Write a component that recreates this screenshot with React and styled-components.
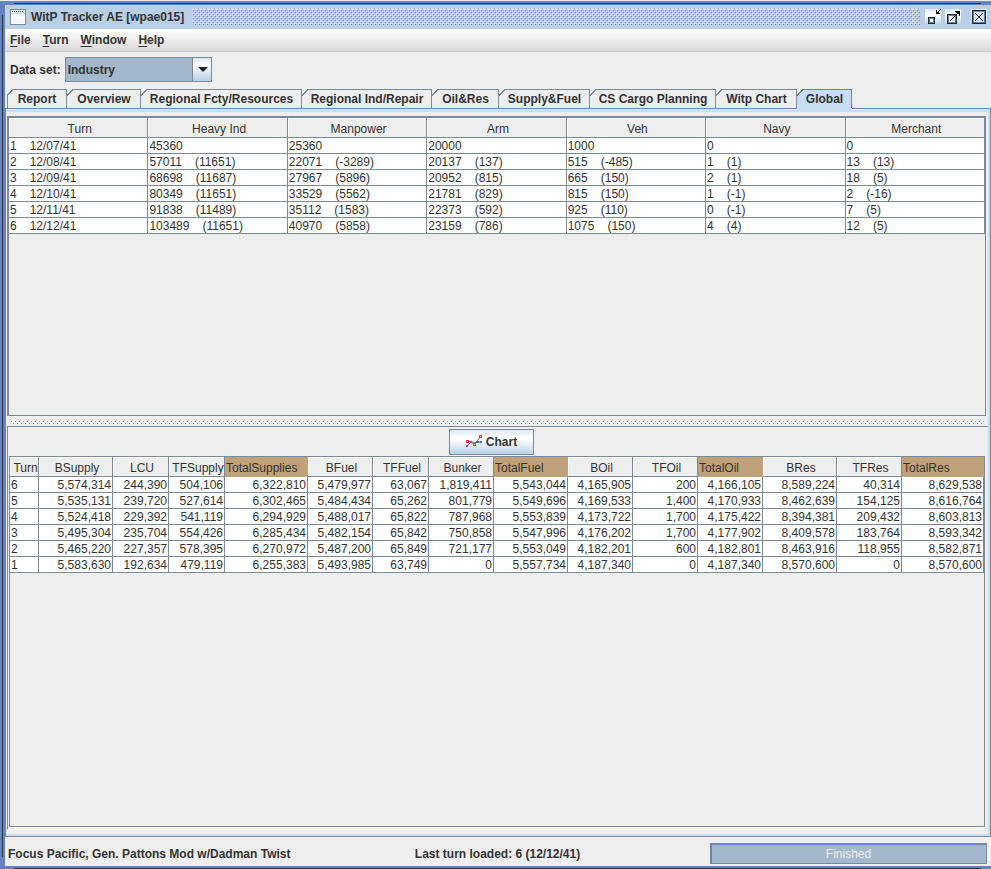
import React from "react";
import styled, { createGlobalStyle, ThemeProvider } from "styled-components";

const theme = {
  text: "#333333",
  panel: "#eeeeee",
  line: "#7a8a99",
  frame: "#6382bf",
  title: "#b8cfe5",
  selected: "#c8ddf2",
  fill: "#a3b8cc",
  total: "#c0a27a"
};

const GlobalStyle = createGlobalStyle`
  * {
    box-sizing: border-box;
  }
  body {
    margin: 0;
    font-family: "Liberation Sans", Arial, sans-serif;
    font-size: 12px;
    line-height: 14px;
    color: #333333;
    background: #eeeeee;
  }
  button, select {
    font: inherit;
    color: inherit;
  }
`;

const Desktop = styled.div`
  display: flex;
  flex-direction: column;
  min-height: 100vh;
  padding-top: 1px;
`;

const Frame = styled.div`
  flex: 1;
  display: flex;
  flex-direction: column;
  padding: 4px 0 3px 5px;
  background:
    linear-gradient(#333, #333) 14px 2px / calc(100% - 24px) 1px no-repeat,
    linear-gradient(#333, #333) 14px 100% / calc(100% - 24px) 1px no-repeat,
    linear-gradient(#333, #333) 2px 14px / 1px calc(100% - 26px) no-repeat,
    ${({ theme }) => theme.frame};
`;

const TitleBar = styled.header`
  display: flex;
  align-items: center;
  height: 24px;
  padding: 0 4px 0 5px;
  gap: 5px;
  background: ${({ theme }) => theme.title};
`;

const Title = styled.h1`
  margin: 0;
  font-size: 12px;
  font-weight: bold;
`;

const TitleBumps = styled.div`
  flex: 1;
  height: 16px;
  margin: 0 0 0 3px;
  background:
    conic-gradient(from 270deg at 1px 1px, #fff 90deg, transparent 0) 0 0 / 4px 4px,
    conic-gradient(from 270deg at 1px 1px, #fff 90deg, transparent 0) 2px 2px / 4px 4px,
    conic-gradient(from 270deg at 1px 1px, #6382bf 90deg, transparent 0) 1px 1px / 4px 4px,
    conic-gradient(from 270deg at 1px 1px, #6382bf 90deg, transparent 0) 3px 3px / 4px 4px;
`;

const WindowButtons = styled.div`
  display: flex;
  gap: 4px;
`;

const WindowButton = styled.button`
  display: block;
  width: 16px;
  height: 16px;
  padding: 0;
  border: none;
  background: linear-gradient(#dde8f3, #ffffff 40%, #b8cfe5);
  margin-left: ${({ $spaced }) => ($spaced ? "6px" : "0")};
  svg {
    display: block;
  }
`;

const MenuBar = styled.nav`
  display: flex;
  align-items: center;
  gap: 12px;
  height: 23px;
  padding: 0 5px;
  border-bottom: 1px solid #cccccc;
  background: linear-gradient(#ffffff, #dadada);
`;

const MenuItem = styled.button`
  padding: 0;
  border: none;
  background: none;
  font-weight: bold;
  u {
    text-underline-offset: 2px;
  }
`;

const Toolbar = styled.div`
  display: flex;
  align-items: center;
  gap: 4px;
  height: 37px;
  padding: 0 5px 2px;
  font-weight: bold;
  background: ${({ theme }) => theme.panel};
`;

const SelectWrapper = styled.div`
  position: relative;
  svg {
    position: absolute;
    top: 10px;
    right: 4px;
    pointer-events: none;
  }
`;

const Select = styled.select`
  display: block;
  appearance: none;
  width: 147px;
  height: 25px;
  padding: 0 20px 0 2px;
  border: 1px solid ${({ theme }) => theme.line};
  border-radius: 0;
  font-weight: bold;
  background:
    linear-gradient(#7a8a99, #7a8a99) calc(100% - 18px) 0 / 1px 100% no-repeat,
    linear-gradient(#dde8f3, #ffffff 30%, #b8cfe5) 100% 0 / 18px 100% no-repeat,
    ${({ theme }) => theme.fill};
`;

const Tabs = styled.div`
  display: flex;
  padding-left: 2px;
  background: ${({ theme }) => theme.panel};
`;

const Tab = styled.button`
  position: relative;
  flex: none;
  width: ${({ $width }) => $width}px;
  height: ${({ $active }) => ($active ? "22px" : "19px")};
  margin-bottom: ${({ $active }) => ($active ? "-3px" : "0")};
  padding: ${({ $active }) => ($active ? "0 0 3px" : "0")};
  border: none;
  font-weight: bold;
  white-space: nowrap;
  color: ${({ theme }) => theme.text};
  --edge: ${({ theme, $active }) => ($active ? theme.frame : theme.line)};
  --fill: ${({ theme, $active }) => ($active ? theme.selected : theme.panel)};
  background:
    linear-gradient(var(--edge), var(--edge)) 6px 0 / calc(100% - 6px) 1px no-repeat,
    linear-gradient(var(--edge), var(--edge)) 100% 0 / 1px ${({ $active }) => ($active ? "19px" : "100%")} no-repeat,
    linear-gradient(135deg, transparent 4px, var(--edge) 4px, var(--edge) 5px, var(--fill) 5px);
  &:first-child {
    background:
      linear-gradient(var(--edge), var(--edge)) 6px 0 / calc(100% - 6px) 1px no-repeat,
      linear-gradient(var(--edge), var(--edge)) 0 6px / 1px 100% no-repeat,
      linear-gradient(var(--edge), var(--edge)) 100% 0 / 1px 100% no-repeat,
      linear-gradient(135deg, transparent 4px, var(--edge) 4px, var(--edge) 5px, var(--fill) 5px);
  }
`;

const TabPane = styled.main`
  flex: 1;
  display: flex;
  flex-direction: column;
  border-top: 1px solid ${({ theme }) => theme.frame};
  border-left: 1px solid ${({ theme }) => theme.frame};
  border-right: 1px solid ${({ theme }) => theme.line};
  border-bottom: 1px solid ${({ theme }) => theme.line};
  background: ${({ theme }) => theme.panel};
`;

const PaneContent = styled.div`
  flex: 1;
  display: flex;
  flex-direction: column;
  margin-top: 1px;
  border-top: 2px solid ${({ theme }) => theme.selected};
  border-right: 2px solid ${({ theme }) => theme.selected};
  border-bottom: 2px solid ${({ theme }) => theme.selected};
  padding: 4px 0 4px 1px;
`;

const TurnPanel = styled.section`
  flex: 300 0 0;
  margin-right: 2px;
  border: 2px solid ${({ theme }) => theme.line};
  border-right-width: 1px;
  border-bottom-width: 1px;
  box-shadow: 0 1px 0 #ffffff;
`;

const Divider = styled.div`
  height: 10px;
  padding: 4px 3px 2px;
  background: ${({ theme }) => theme.panel};
  &::before {
    content: "";
    display: block;
    height: 4px;
    background:
      conic-gradient(from 270deg at 1px 1px, #7a8a99 90deg, transparent 0) 1px 1px / 4px 4px,
      conic-gradient(from 270deg at 1px 1px, #7a8a99 90deg, transparent 0) 3px 3px / 4px 4px,
      conic-gradient(from 270deg at 1px 1px, #fff 90deg, transparent 0) 0 0 / 4px 4px,
      conic-gradient(from 270deg at 1px 1px, #fff 90deg, transparent 0) 2px 2px / 4px 4px;
  }
`;

const StockPanel = styled.section`
  flex: 401 0 0;
  display: flex;
  flex-direction: column;
  padding: 2px 2px 2px 1px;
  border-top: 1px solid ${({ theme }) => theme.line};
  border-left: 1px solid ${({ theme }) => theme.line};
  border-bottom: 1px solid #ffffff;
`;

const ChartButton = styled.button`
  align-self: center;
  display: flex;
  align-items: center;
  justify-content: center;
  gap: 4px;
  width: 85px;
  height: 26px;
  margin: 0 12px 1px 0;
  padding: 0;
  border: 1px solid ${({ theme }) => theme.line};
  font-weight: bold;
  background: linear-gradient(#dde8f3, #ffffff 30%, #ffffff 40%, #b8cfe5);
`;

const StockScroll = styled.div`
  flex: 1;
  border: 1px solid ${({ theme }) => theme.line};
  margin-right: 1px;
  box-shadow: 0 1px 0 #ffffff;
`;

const Table = styled.table`
  width: 100%;
  table-layout: fixed;
  border-collapse: separate;
  border-spacing: 0;
`;

const Column = styled.col`
  width: ${({ $width }) => $width}px;
`;

const HeadCell = styled.th`
  height: 20px;
  padding: ${({ $total }) => ($total ? "2px 0 0 1px" : "2px 0 0 3px")};
  font-weight: normal;
  text-align: ${({ $total }) => ($total ? "left" : "center")};
  white-space: nowrap;
  overflow: hidden;
  border-right: 1px solid ${({ theme, $total }) => ($total ? theme.total : theme.line)};
  border-bottom: 1px solid ${({ theme, $total }) => ($total ? theme.total : theme.line)};
  background: ${({ theme, $total }) => ($total ? theme.total : theme.panel)};
  box-shadow: ${({ $total }) => ($total ? "none" : "inset 1px 1px 0 #ffffff")};
`;

const Cell = styled.td`
  height: 16px;
  padding: 1px 1px 0;
  text-align: ${({ $right }) => ($right ? "right" : "left")};
  white-space: pre;
  overflow: hidden;
  border-right: 1px solid ${({ theme }) => theme.line};
  border-bottom: 1px solid ${({ theme }) => theme.line};
  background: #ffffff;
`;

const Change = styled.span`
  margin-left: 13px;
`;

const StatusBar = styled.footer`
  display: grid;
  grid-template-columns: 1fr auto 1fr;
  align-items: center;
  height: 29px;
  padding: 4px 4px 0 3px;
  font-weight: bold;
  background: ${({ theme }) => theme.panel};
`;

const Progress = styled.div`
  justify-self: end;
  width: 277px;
  height: 21px;
  border: 1px solid ${({ theme }) => theme.line};
  box-shadow: inset 1px 1px 0 ${({ theme }) => theme.frame};
  line-height: 20px;
  font-weight: normal;
  text-align: center;
  color: #eeeeee;
  background: ${({ theme }) => theme.fill};
`;

const menus = ["File", "Turn", "Window", "Help"];

const tabs = [
  { name: "Report", width: 60 },
  { name: "Overview", width: 74 },
  { name: "Regional Fcty/Resources", width: 161 },
  { name: "Regional Ind/Repair", width: 130 },
  { name: "Oil&Res", width: 67 },
  { name: "Supply&Fuel", width: 91 },
  { name: "CS Cargo Planning", width: 126 },
  { name: "Witp Chart", width: 81 },
  { name: "Global", width: 55 }
];

const turnColumns = ["Turn", "Heavy Ind", "Manpower", "Arm", "Veh", "Navy", "Merchant"];

// each value is followed by its change since the previous turn
const turnRows = [
  ["1|12/07/41", "45360", "25360", "20000", "1000", "0", "0"],
  ["2|12/08/41", "57011|(11651)", "22071|(-3289)", "20137|(137)", "515|(-485)", "1|(1)", "13|(13)"],
  ["3|12/09/41", "68698|(11687)", "27967|(5896)", "20952|(815)", "665|(150)", "2|(1)", "18|(5)"],
  ["4|12/10/41", "80349|(11651)", "33529|(5562)", "21781|(829)", "815|(150)", "1|(-1)", "2|(-16)"],
  ["5|12/11/41", "91838|(11489)", "35112|(1583)", "22373|(592)", "925|(110)", "0|(-1)", "7|(5)"],
  ["6|12/12/41", "103489|(11651)", "40970|(5858)", "23159|(786)", "1075|(150)", "4|(4)", "12|(5)"]
];

const stockColumns = [
  { name: "Turn", width: 29 },
  { name: "BSupply", width: 74 },
  { name: "LCU", width: 56 },
  { name: "TFSupply", width: 56 },
  { name: "TotalSupplies", width: 83, total: true },
  { name: "BFuel", width: 65 },
  { name: "TFFuel", width: 56 },
  { name: "Bunker", width: 65 },
  { name: "TotalFuel", width: 74, total: true },
  { name: "BOil", width: 65 },
  { name: "TFOil", width: 65 },
  { name: "TotalOil", width: 65, total: true },
  { name: "BRes", width: 74 },
  { name: "TFRes", width: 65 },
  { name: "TotalRes", width: 82, total: true }
];

const stockRows = [
  [6, 5574314, 244390, 504106, 6322810, 5479977, 63067, 1819411, 5543044, 4165905, 200, 4166105, 8589224, 40314, 8629538],
  [5, 5535131, 239720, 527614, 6302465, 5484434, 65262, 801779, 5549696, 4169533, 1400, 4170933, 8462639, 154125, 8616764],
  [4, 5524418, 229392, 541119, 6294929, 5488017, 65822, 787968, 5553839, 4173722, 1700, 4175422, 8394381, 209432, 8603813],
  [3, 5495304, 235704, 554426, 6285434, 5482154, 65842, 750858, 5547996, 4176202, 1700, 4177902, 8409578, 183764, 8593342],
  [2, 5465220, 227357, 578395, 6270972, 5487200, 65849, 721177, 5553049, 4182201, 600, 4182801, 8463916, 118955, 8582871],
  [1, 5583630, 192634, 479119, 6255383, 5493985, 63749, 0, 5557734, 4187340, 0, 4187340, 8570600, 0, 8570600]
];

const AppIcon = () => (
  <svg width="16" height="16" viewBox="0 0 16 16" shapeRendering="crispEdges" aria-hidden="true">
    <rect x="0" y="0" width="16" height="16" rx="1" fill="#7a8a99" />
    <rect x="1" y="1" width="14" height="3" fill="#e4edf6" />
    <path d="M2 2h1v1h-1zM4 2h1v1h-1zM6 2h1v1h-1zM8 2h1v1h-1zM10 2h1v1h-1zM12 2h1v1h-1z" fill="#333333" />
    <rect x="1" y="4" width="14" height="1" fill="#b8cfe5" />
    <rect x="1" y="5" width="14" height="10" fill="#ffffff" />
    <rect x="2" y="6" width="12" height="8" fill="#f4f8fc" />
  </svg>
);

const MinimizeIcon = () => (
  <svg width="16" height="16" viewBox="0 0 16 16" shapeRendering="crispEdges">
    <path d="M3 8h7v7h-7z" fill="#1c2438" />
    <path d="M4 9h5v5h-5z" fill="#6382bf" />
    <path d="M5 10h3v3h-3z" fill="#ffffff" />
    <path d="M11 1h1v4h-1zM11 4h4v1h-4zM12 3h2v1h-2zM13 2h1v1h-1zM14 1h1v1h-1zM15 0h1v1h-1z" fill="#111111" />
  </svg>
);

const MaximizeIcon = () => (
  <svg width="16" height="16" viewBox="0 0 16 16" shapeRendering="crispEdges">
    <path d="M2 5h10v10h-10z" fill="#1c2438" />
    <path d="M3 6h8v8h-8z" fill="#6382bf" />
    <path d="M4 7h6v6h-6z" fill="#eef4fa" />
    <path d="M5 11h1v1h-1zM6 10h1v1h-1zM7 9h1v1h-1zM8 8h1v1h-1zM9 7h1v1h-1zM10 6h1v1h-1zM11 5h1v1h-1zM12 4h1v1h-1zM11 3h2v1h-2zM10 2h5v1h-5zM14 2h1v5h-1zM13 3h1v2h-1z" fill="#111111" />
  </svg>
);

const CloseIcon = () => (
  <svg width="16" height="16" viewBox="0 0 16 16" shapeRendering="crispEdges">
    <path d="M1 1h14v14h-14z" fill="#1c2438" />
    <path d="M2 2h12v12h-12z" fill="#6382bf" />
    <path d="M3 3h10v10h-10z" fill="#dde8f3" />
    <path d="M4 4L12 12M12 4L4 12" stroke="#1c2438" strokeWidth="1" shapeRendering="auto" />
  </svg>
);

const ChartIcon = () => (
  <svg width="16" height="16" viewBox="0 0 16 16" aria-hidden="true">
    <path d="M1 12L5 8L9 9L12 7L15 9" fill="none" stroke="#3f6fc4" strokeWidth="1" />
    <path d="M0 11h2v2h-2zM4 7h2v2h-2zM10 7h3v2h-3zM14 7h2v2h-2z" fill="#3f6fc4" />
    <path d="M1 7L5 8L8 10L11 7L15 2" fill="none" stroke="#ee3a3a" strokeWidth="1" />
    <path d="M0 6h3v3h-3zM7 9h3v3h-3zM13 1h3v3h-3z" fill="#ee3a3a" />
    <path d="M1 7h1v1h-1zM8 10h1v1h-1zM14 2h1v1h-1z" fill="#ffb0b0" />
  </svg>
);

const TurnTable = () => (
  <Table>
    <thead>
      <tr>
        {turnColumns.map((name) => (
          <HeadCell key={name} scope="col">
            {name}
          </HeadCell>
        ))}
      </tr>
    </thead>
    <tbody>
      {turnRows.map((row) => (
        <tr key={row[0]}>
          {row.map((value, i) => {
            const [amount, change] = value.split("|");
            return (
              <Cell key={turnColumns[i]}>
                {amount}
                {change && <Change>{change}</Change>}
              </Cell>
            );
          })}
        </tr>
      ))}
    </tbody>
  </Table>
);

const StockTable = () => (
  <Table>
    <colgroup>
      {stockColumns.map(({ name, width }) => (
        <Column key={name} $width={width} />
      ))}
    </colgroup>
    <thead>
      <tr>
        {stockColumns.map(({ name, total }) => (
          <HeadCell key={name} scope="col" $total={total}>
            {name}
          </HeadCell>
        ))}
      </tr>
    </thead>
    <tbody>
      {stockRows.map((row) => (
        <tr key={row[0]}>
          {row.map((value, i) => (
            <Cell key={stockColumns[i].name} $right={i > 0}>
              {value.toLocaleString("en-US")}
            </Cell>
          ))}
        </tr>
      ))}
    </tbody>
  </Table>
);

const App = () => {
  const [activeTab, setActiveTab] = React.useState("Global");

  return (
    <ThemeProvider theme={theme}>
      <GlobalStyle />
      <Desktop>
        <Frame>
          <TitleBar>
            <AppIcon />
            <Title>WitP Tracker AE [wpae015]</Title>
            <TitleBumps />
            <WindowButtons>
              <WindowButton aria-label="Minimize">
                <MinimizeIcon />
              </WindowButton>
              <WindowButton aria-label="Maximize">
                <MaximizeIcon />
              </WindowButton>
              <WindowButton aria-label="Close" $spaced>
                <CloseIcon />
              </WindowButton>
            </WindowButtons>
          </TitleBar>
          <MenuBar>
            {menus.map((menu) => (
              <MenuItem key={menu}>
                <u>{menu[0]}</u>
                {menu.slice(1)}
              </MenuItem>
            ))}
          </MenuBar>
          <Toolbar>
            <label htmlFor="dataSet">Data set:</label>
            <SelectWrapper>
              <Select id="dataSet" defaultValue="Industry">
                <option>Industry</option>
              </Select>
              <svg width="10" height="5" viewBox="0 0 10 5" aria-hidden="true">
                <path d="M0 0h10L5 5z" fill="#222222" />
              </svg>
            </SelectWrapper>
          </Toolbar>
          <Tabs role="tablist">
            {tabs.map(({ name, width }) => (
              <Tab
                key={name}
                role="tab"
                aria-selected={name === activeTab}
                $active={name === activeTab}
                $width={width}
                onClick={() => setActiveTab(name)}
              >
                {name}
              </Tab>
            ))}
          </Tabs>
          <TabPane>
            <PaneContent>
              <TurnPanel>
                <TurnTable />
              </TurnPanel>
              <Divider />
              <StockPanel>
                <ChartButton>
                  <ChartIcon />
                  Chart
                </ChartButton>
                <StockScroll>
                  <StockTable />
                </StockScroll>
              </StockPanel>
            </PaneContent>
          </TabPane>
          <StatusBar>
            <span>Focus Pacific, Gen. Pattons Mod w/Dadman Twist</span>
            <span>Last turn loaded: 6 (12/12/41)</span>
            <Progress role="progressbar" aria-valuenow={100}>
              Finished
            </Progress>
          </StatusBar>
        </Frame>
      </Desktop>
    </ThemeProvider>
  );
};

export default App;
